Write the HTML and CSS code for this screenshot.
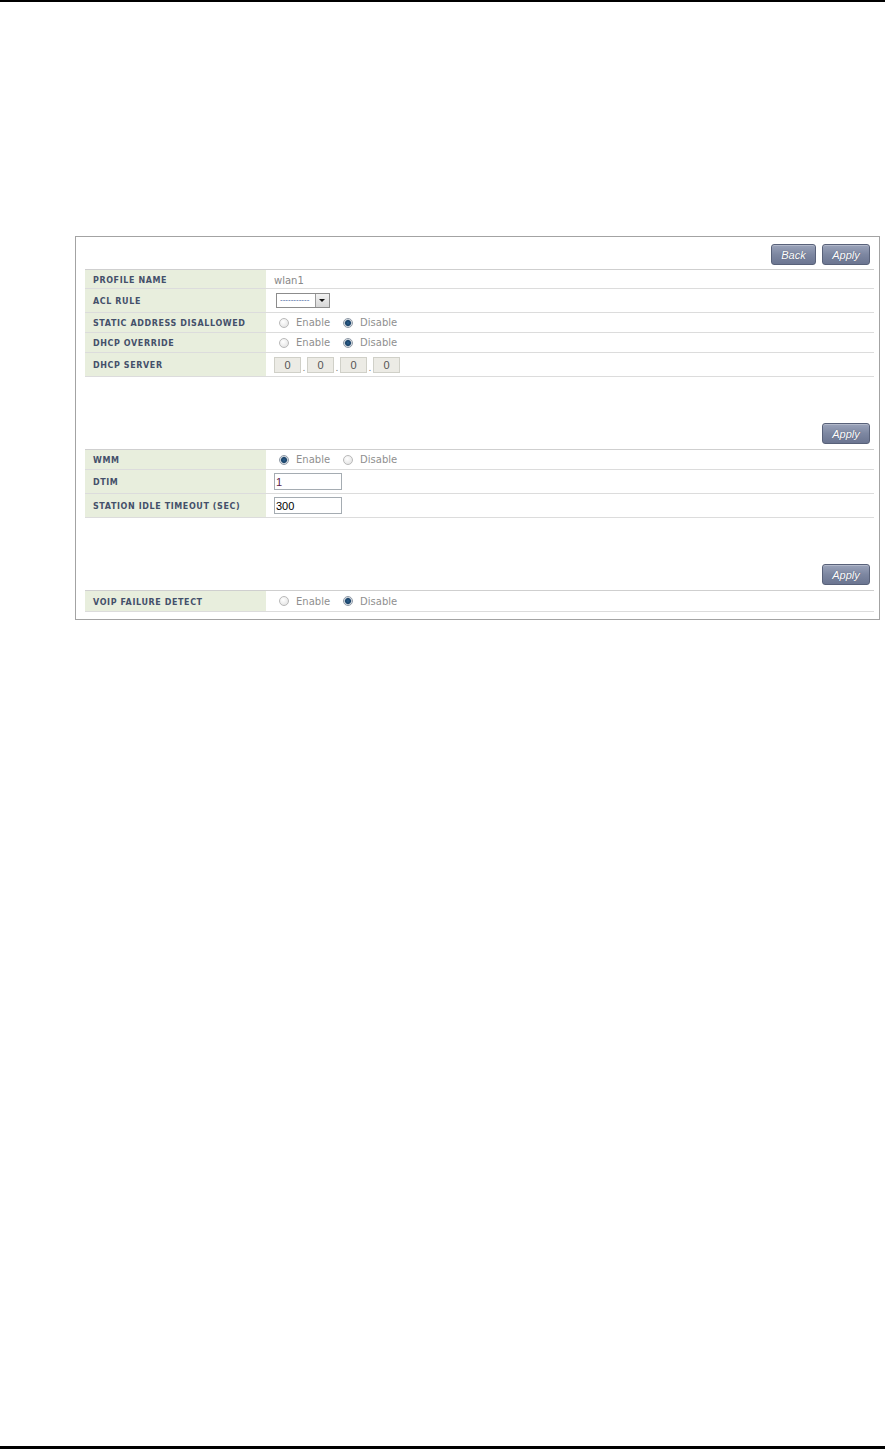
FILE: index.html
```html
<!DOCTYPE html>
<html lang="en">
<head>
    <meta charset="UTF-8">
    <title>WLAN Profile</title>
    <link rel="stylesheet" href="styles.css">
</head>
<body>
<div class="page">
    <div class="rule-top"></div>

    <div class="panel">
        <div class="toolbar first">
            <button class="btn">Back</button>
            <button class="btn">Apply</button>
        </div>
        <div class="grid">
            <div class="row h18">
                <div class="label">PROFILE NAME</div>
                <div class="value text">wlan1</div>
            </div>
            <div class="row h23">
                <div class="label">ACL RULE</div>
                <div class="value">
                    <div class="select"><span class="sel-text">-----------</span><span class="sel-arrow"></span></div>
                </div>
            </div>
            <div class="row h19">
                <div class="label">STATIC ADDRESS DISALLOWED</div>
                <div class="value">
                    <span class="radio"></span><span class="opt">Enable</span>
                    <span class="radio on"></span><span class="opt">Disable</span>
                </div>
            </div>
            <div class="row h19">
                <div class="label">DHCP OVERRIDE</div>
                <div class="value">
                    <span class="radio"></span><span class="opt">Enable</span>
                    <span class="radio on"></span><span class="opt">Disable</span>
                </div>
            </div>
            <div class="row h23">
                <div class="label">DHCP SERVER</div>
                <div class="value">
                    <span class="ip">0</span><span class="dot">.</span><span class="ip">0</span><span class="dot">.</span><span class="ip">0</span><span class="dot">.</span><span class="ip">0</span>
                </div>
            </div>
        </div>

        <div class="toolbar">
            <button class="btn">Apply</button>
        </div>
        <div class="grid">
            <div class="row h19">
                <div class="label">WMM</div>
                <div class="value">
                    <span class="radio on"></span><span class="opt">Enable</span>
                    <span class="radio"></span><span class="opt">Disable</span>
                </div>
            </div>
            <div class="row h23">
                <div class="label">DTIM</div>
                <div class="value"><input class="field dim" type="text" value="1"></div>
            </div>
            <div class="row h23">
                <div class="label">STATION IDLE TIMEOUT (SEC)</div>
                <div class="value"><input class="field" type="text" value="300"></div>
            </div>
        </div>

        <div class="toolbar">
            <button class="btn">Apply</button>
        </div>
        <div class="grid">
            <div class="row h20">
                <div class="label">VOIP FAILURE DETECT</div>
                <div class="value">
                    <span class="radio"></span><span class="opt">Enable</span>
                    <span class="radio on"></span><span class="opt">Disable</span>
                </div>
            </div>
        </div>
    </div>

    <div class="rule-bottom"></div>
</div>
</body>
</html>
```

FILE: styles.css
```css
body {
    margin: 0;
    padding: 0;
    background-color: #ffffff;
    font-family: "DejaVu Sans", Verdana, sans-serif;
}

.page {
    height: 1449px;
    display: flex;
    flex-direction: column;
}

.rule-top {
    height: 2px;
    background-color: #000;
}

.rule-bottom {
    height: 3px;
    margin-top: auto;
    background-color: #000;
}

.panel {
    margin: 234px 0 0 75px;
    width: 805px;
    box-sizing: border-box;
    border: 1px solid #a3a3a3;
    padding: 0 5px 7px 9px;
}

/* button bars above each group */
.toolbar {
    height: 72px;
    display: flex;
    justify-content: flex-end;
    align-items: flex-start;
    gap: 6px;
    padding: 46px 2px 0 0;
    box-sizing: border-box;
}

.toolbar.first {
    height: 32px;
    padding-top: 7px;
}

.btn {
    height: 21px;
    min-width: 45px;
    padding: 0 6px;
    border: 1px solid #586179;
    border-radius: 3px;
    background: linear-gradient(#9aa3ba, #7d87a1 50%, #6b7591);
    color: #fff;
    font-family: "Liberation Sans", Arial, sans-serif;
    font-style: italic;
    font-size: 11px;
    text-shadow: 0 0 1px #4a536a;
    box-shadow: inset 0 1px 0 rgba(255, 255, 255, 0.25);
}

.toolbar .btn:last-child {
    min-width: 48px;
    margin-right: 2px;
}

.grid {
    border-top: 1px solid #cfcfcf;
}

.row {
    display: grid;
    grid-template-columns: 181px 1fr;
    border-bottom: 1px solid #dcdcdc;
}

.row.h18 { height: 18px; }
.row.h19 { height: 19px; }
.row.h20 { height: 20px; }
.row.h23 { height: 23px; }

.label {
    background-color: #e8eedd;
    padding: 2px 0 0 8px;
    display: flex;
    align-items: center;
    font-size: 8px;
    font-weight: bold;
    letter-spacing: 0.6px;
    color: #44506a;
}

.value {
    padding-left: 8px;
    display: flex;
    align-items: center;
    font-size: 10px;
    color: #8f8f8f;
}

.value.text {
    padding-top: 3px;
    color: #888;
}

.radio {
    width: 8px;
    height: 8px;
    margin: 0 7px 0 5px;
    border-radius: 50%;
    border: 1px solid #b9b9b9;
    background: radial-gradient(circle at 40% 35%, #ffffff, #dedede);
    box-sizing: content-box;
}

.radio.on {
    background: radial-gradient(circle at 50% 50%, #2d5f8e 0, #184268 2.5px, #c4ccd6 3.5px, #eef0f2 4px);
    border-color: #8f9aa6;
}

.opt {
    margin-right: 8px;
}

.select {
    margin-left: 2px;
    width: 54px;
    height: 15px;
    box-sizing: border-box;
    border: 1px solid #8c8c8c;
    display: flex;
    background: #fff;
}

.sel-text {
    flex: 1;
    font-family: "Liberation Sans", Arial, sans-serif;
    font-size: 8px;
    color: #3a5a9a;
    line-height: 12px;
    padding-left: 3px;
    overflow: hidden;
}

.sel-arrow {
    width: 13px;
    border-left: 1px solid #9a9a9a;
    background: linear-gradient(#f2f2f2, #d6d6d6);
    position: relative;
}

.sel-arrow::after {
    content: "";
    position: absolute;
    left: 3px;
    top: 5px;
    border-left: 3px solid transparent;
    border-right: 3px solid transparent;
    border-top: 3px solid #111;
}

.ip {
    width: 27px;
    height: 16px;
    box-sizing: border-box;
    border: 1px solid #d0d0c8;
    background-color: #ecebe5;
    font-family: "Liberation Sans", Arial, sans-serif;
    font-size: 11px;
    color: #555;
    display: flex;
    align-items: center;
    justify-content: center;
}

.dot {
    width: 6px;
    text-align: center;
    font-size: 9px;
    color: #777;
    align-self: flex-end;
    padding-bottom: 3px;
}

.field {
    width: 68px;
    height: 17px;
    box-sizing: border-box;
    border: 1px solid #a5acb2;
    padding: 0 1px;
    font-family: "Liberation Sans", Arial, sans-serif;
    font-size: 11px;
    color: #000;
    outline: none;
}

.field.dim {
    color: #5a1a4a;
}
```
